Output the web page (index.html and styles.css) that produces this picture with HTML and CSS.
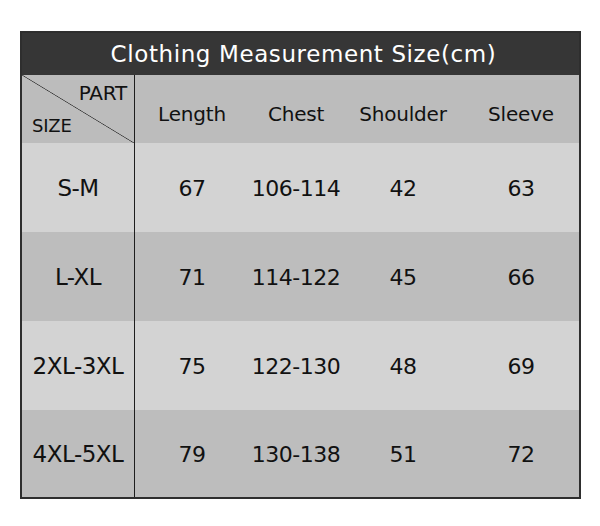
FILE: index.html
```html
<!DOCTYPE html>
<html>
<head>
<meta charset="utf-8">
<link rel="stylesheet" href="styles.css">
</head>
<body>
<div class="chart">
  <div class="title">Clothing Measurement Size(cm)</div>
  <div class="row head">
    <div class="cell corner"><span class="part">PART</span><span class="size">SIZE</span></div>
    <div class="cell">Length</div>
    <div class="cell">Chest</div>
    <div class="cell">Shoulder</div>
    <div class="cell">Sleeve</div>
  </div>
  <div class="row light">
    <div class="cell first">S-M</div>
    <div class="cell">67</div>
    <div class="cell">106-114</div>
    <div class="cell">42</div>
    <div class="cell">63</div>
  </div>
  <div class="row dark">
    <div class="cell first">L-XL</div>
    <div class="cell">71</div>
    <div class="cell">114-122</div>
    <div class="cell">45</div>
    <div class="cell">66</div>
  </div>
  <div class="row light">
    <div class="cell first">2XL-3XL</div>
    <div class="cell">75</div>
    <div class="cell">122-130</div>
    <div class="cell">48</div>
    <div class="cell">69</div>
  </div>
  <div class="row dark last">
    <div class="cell first">4XL-5XL</div>
    <div class="cell">79</div>
    <div class="cell">130-138</div>
    <div class="cell">51</div>
    <div class="cell">72</div>
  </div>
</div>
</body>
</html>
```
FILE: styles.css
```css
html, body {
  margin: 0;
  padding: 0;
  background: #ffffff;
}
body {
  padding: 31px 0 0 20px;
  font-family: "DejaVu Sans", "Liberation Sans", sans-serif;
  color: #111111;
}
.chart {
  width: 557px;
  border: 2px solid #2e2e2e;
  display: flex;
  flex-direction: column;
}
.title {
  height: 41px;
  background: #363636;
  color: #ffffff;
  font-size: 23px;
  letter-spacing: 0.6px;
  display: flex;
  align-items: center;
  justify-content: center;
  padding-bottom: 1px;
  padding-left: 6px;
}
.row {
  display: grid;
  grid-template-columns: 113px 114px 94px 120px 1fr;
  height: 89px;
  font-size: 22px;
  letter-spacing: -0.5px;
}
.row.head {
  height: 68px;
  font-size: 20px;
  letter-spacing: -0.2px;
  background: #bcbcbc;
}
.row.light { background: #d3d3d3; }
.row.dark { background: #bdbdbd; }
.row.last { height: 87px; }
.cell {
  display: flex;
  align-items: center;
  justify-content: center;
  padding-top: 2px;
}
.cell.first {
  border-right: 1px solid #1e1e1e;
  font-size: 23px;
  padding-top: 0;
}
.row.head .cell { padding-top: 10px; }
.row.head .cell.corner {
  border-right: 1px solid #1e1e1e;
  display: flex;
  flex-direction: column;
  justify-content: space-between;
  align-items: stretch;
  padding: 7px 7px 6px 10px;
  font-size: 20px;
  background: linear-gradient(to top right, transparent calc(50% - 0.7px), #3a3a3a 50%, transparent calc(50% + 0.7px));
}
.part { align-self: flex-end; line-height: 22px; }
.size { align-self: flex-start; line-height: 22px; font-size: 18px; }
```
